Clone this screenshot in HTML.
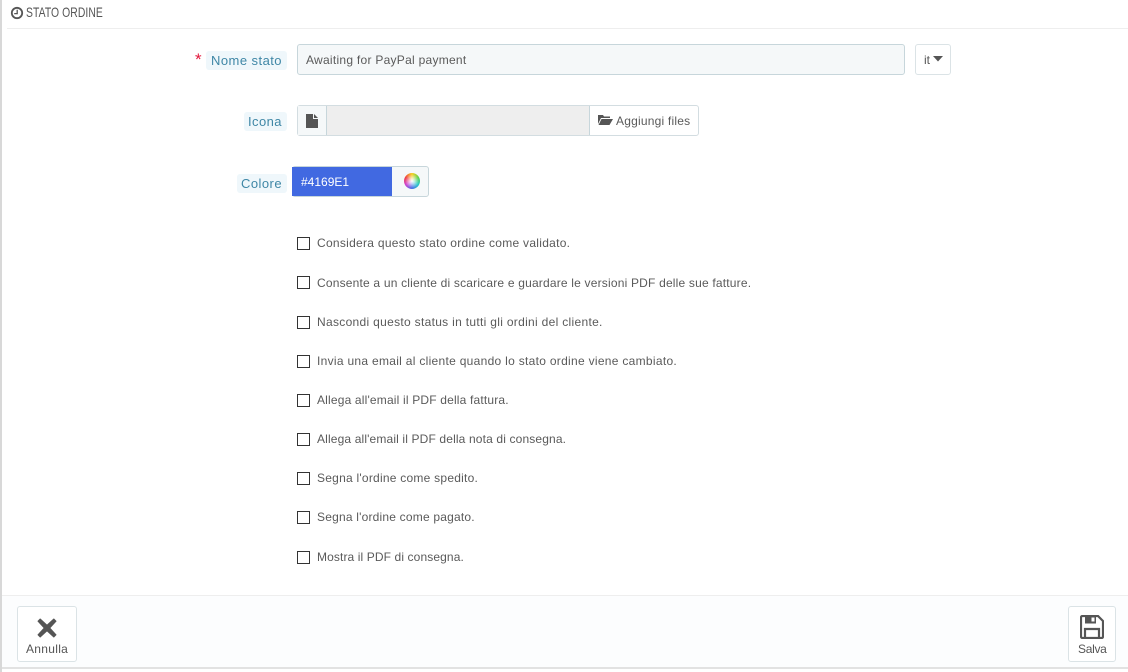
<!DOCTYPE html>
<html lang="it">
<head>
<meta charset="utf-8">
<title>Stato ordine</title>
<style>
html,body{margin:0;padding:0;width:1128px;height:672px;overflow:hidden;background:#fff}
body{position:relative;font-family:"Liberation Sans",sans-serif;color:#555}
div,span,svg{position:absolute;box-sizing:border-box}
.t{white-space:nowrap;line-height:16px}
.lab{height:19px;background:#eff7fb;border-radius:3px;color:#3f87a6;font-size:13px;line-height:19px;text-align:right;padding-right:5px;white-space:nowrap;letter-spacing:.45px}
.cb{left:297px;width:13px;height:13px;border:1px solid #333;background:#fff}
.cl{left:317px;font-size:12px;color:#5a5a5a}
.btn{background:#fff;border:1px solid #dbe3e6;border-radius:3px}
</style>
</head>
<body>
<div style="left:0;top:0;width:2px;height:672px;background:#d8d8d8"></div>
<div style="left:2px;top:667px;width:1126px;height:2px;background:#e2e2e2"></div>
<div style="left:7px;top:28px;width:1121px;height:1px;background:#eeeeee"></div>

<svg style="left:10px;top:6px" width="14" height="14" viewBox="0 0 14 14"><circle cx="7" cy="7" r="5.2" fill="none" stroke="#555" stroke-width="1.8"/><path d="M7.2 3.8V7.6H4.2" fill="none" stroke="#555" stroke-width="1.3"/></svg>
<div class="t" style="left:26px;top:4px;font-size:14px;color:#555;transform:scaleX(.74);transform-origin:0 0;letter-spacing:.1px">STATO ORDINE</div>

<div class="t" style="left:195px;top:52px;color:#e2173b;font-size:17px">*</div>
<div class="lab" style="left:206px;top:51px;width:81px">Nome stato</div>
<div class="lab" style="left:244px;top:112px;width:43px">Icona</div>
<div class="lab" style="left:237px;top:174px;width:50px">Colore</div>

<div style="left:297px;top:44px;width:608px;height:31px;background:#f5f8f9;border:1px solid #c7d6db;border-radius:3px"></div>
<div class="t" style="left:306px;top:52px;font-size:12px;letter-spacing:.27px;color:#5a5a5a">Awaiting for PayPal payment</div>

<div class="btn" style="left:915px;top:44px;width:36px;height:31px"></div>
<div class="t" style="left:924px;top:52px;font-size:12px;color:#555">it</div>
<svg style="left:933px;top:56px" width="10" height="6" viewBox="0 0 10 6"><path d="M0 0H10L5 5.5Z" fill="#555"/></svg>

<div style="left:297px;top:105px;width:402px;height:31px;background:#fff;border:1px solid #d3dde1;border-radius:3px"></div>
<div style="left:298px;top:106px;width:29px;height:29px;background:#f5f8f9;border-right:1px solid #c7d6db"></div>
<div style="left:327px;top:106px;width:263px;height:29px;background:#eeeeee;border-right:1px solid #c7d6db"></div>
<svg style="left:306px;top:114px" width="12" height="14" viewBox="0 0 12 14"><path d="M0 0H7V5H12V14H0ZM8 0L12 4H8Z" fill="#555"/></svg>
<svg style="left:598px;top:114px" width="15" height="12" viewBox="0 0 15 12"><path d="M0 1H5L6 2.5H12V4H3L0 10ZM3.5 5H15L11.5 11H0.5Z" fill="#555"/></svg>
<div class="t" style="left:616px;top:113px;font-size:12px;letter-spacing:.21px;color:#5a5a5a">Aggiungi files</div>

<div style="left:292px;top:166px;width:137px;height:31px;background:#f5f8f9;border:1px solid #c7d6db;border-radius:3px"></div>
<div style="left:292px;top:167px;width:100px;height:29px;background:#4169e1"></div>
<div class="t" style="left:301px;top:174px;font-size:12px;letter-spacing:0;color:#fff">#4169E1</div>
<div style="left:404px;top:173px;width:16px;height:16px;border-radius:50%;background:radial-gradient(circle at 50% 50%,#fff 0,rgba(255,255,255,.7) 22%,rgba(255,255,255,0) 62%),conic-gradient(#f5d020,#5fd34a,#28c8c8,#4a70e8,#d040d0,#f04040,#f5d020)"></div>

<div class="cb" style="top:237px"></div><div class="t cl" style="top:235px;letter-spacing:.284px">Considera questo stato ordine come validato.</div>
<div class="cb" style="top:276px"></div><div class="t cl" style="top:275px;letter-spacing:.192px">Consente a un cliente di scaricare e guardare le versioni PDF delle sue fatture.</div>
<div class="cb" style="top:316px"></div><div class="t cl" style="top:314px;letter-spacing:.307px">Nascondi questo status in tutti gli ordini del cliente.</div>
<div class="cb" style="top:355px"></div><div class="t cl" style="top:353px;letter-spacing:.295px">Invia una email al cliente quando lo stato ordine viene cambiato.</div>
<div class="cb" style="top:394px"></div><div class="t cl" style="top:392px;letter-spacing:.177px">Allega all'email il PDF della fattura.</div>
<div class="cb" style="top:433px"></div><div class="t cl" style="top:431px;letter-spacing:.143px">Allega all'email il PDF della nota di consegna.</div>
<div class="cb" style="top:472px"></div><div class="t cl" style="top:470px;letter-spacing:.24px">Segna l'ordine come spedito.</div>
<div class="cb" style="top:511px"></div><div class="t cl" style="top:509px;letter-spacing:.2px">Segna l'ordine come pagato.</div>
<div class="cb" style="top:551px"></div><div class="t cl" style="top:549px;letter-spacing:.11px">Mostra il PDF di consegna.</div>

<div style="left:2px;top:595px;width:1126px;height:72px;background:#fcfdfe;border-top:1px solid #eeeeee"></div>

<div class="btn" style="left:17px;top:606px;width:60px;height:56px"></div>
<svg style="left:37px;top:618px" width="20" height="20" viewBox="0 0 20 20"><path d="M3.2 1 10 7.3 16.8 1 19 3.2 12.7 10 19 16.8 16.8 19 10 12.7 3.2 19 1 16.8 7.3 10 1 3.2Z" fill="#555" stroke="#555" stroke-width="1" stroke-linejoin="round"/></svg>
<div class="t" style="left:26px;top:641px;font-size:12px;letter-spacing:.3px;color:#555">Annulla</div>

<div class="btn" style="left:1068px;top:606px;width:48px;height:56px"></div>
<svg style="left:1080px;top:615px" width="24" height="24" viewBox="0 0 24 24"><path d="M1 2.5C1 1.6 1.6 1 2.5 1H18L23 6V21.5C23 22.4 22.4 23 21.5 23H2.5C1.6 23 1 22.4 1 21.5Z" fill="none" stroke="#555" stroke-width="2.2"/><path d="M5 1H16V8.5H5Z" fill="#555"/><rect x="11.5" y="2.5" width="3" height="4" fill="#fff"/><path d="M5 22.5V14H19V22.5" fill="none" stroke="#555" stroke-width="2.2"/></svg>
<div class="t" style="left:1078px;top:641px;font-size:12px;letter-spacing:-.3px;color:#555">Salva</div>
</body>
</html>
